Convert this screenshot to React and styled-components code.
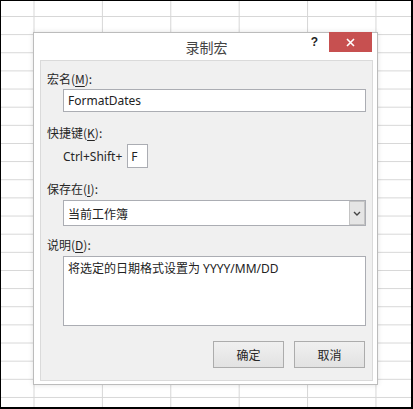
import styled, { createGlobalStyle } from "styled-components"

const Global = createGlobalStyle`
    body {
        margin: 0;
        font-family: "Noto Sans", "Noto Sans CJK SC", sans-serif;
    }
`

const Sheet = styled.div`
    box-sizing: border-box;
    width: 413px;
    height: 409px;
    border: solid #000;
    border-width: 1px 2px 2px 1px;
    padding: 31px 0 0 32px;
    background-color: #fff;
    background-image:
        linear-gradient(to right, #d6d6d6 1px, transparent 1px),
        linear-gradient(to bottom, #d6d6d6 1px, transparent 1px);
    background-size: 68.4px 100%, 100% 18.15px;
    background-position: 32.5px 0, 0 15px;
    overflow: hidden;
`

const Dialog = styled.div`
    box-sizing: border-box;
    width: 345px;
    height: 353px;
    background: #fff;
    border: 1px solid #bcbcbc;
    box-shadow: 0 0 5px rgba(0, 0, 0, 0.12);
    display: flex;
    flex-direction: column;
`

const TitleBar = styled.div`
    height: 28px;
    display: grid;
    grid-template-columns: 1fr auto 1fr;
    align-items: center;
`

const Title = styled.div`
    grid-column: 2;
    font-family: "Noto Sans CJK SC", sans-serif;
    font-size: 14px;
    color: #444;
    padding-left: 2px;
`

const Controls = styled.div`
    grid-column: 3;
    align-self: start;
    display: flex;
    justify-content: flex-end;
    align-items: flex-start;
    margin-top: -1px;
    padding-right: 5px;
`

const Help = styled.span`
    font-family: "Liberation Sans", sans-serif;
    font-weight: bold;
    font-size: 12px;
    color: #222;
    margin: 3px 11px 0 0;
`

const Close = styled.div`
    width: 43px;
    height: 20px;
    background: #c75050;
    display: flex;
    align-items: center;
    justify-content: center;
`

const Panel = styled.div`
    flex: 1;
    margin: 0 4px 3px 6px;
    background: #f0f0f0;
    border: 1px solid #dadada;
    padding: 10px 6px 12px 6px;
    display: flex;
    flex-direction: column;
`

const Label = styled.div`
    font-family: "Noto Sans CJK SC", sans-serif;
    font-size: 12px;
    line-height: 16px;
    height: 16px;
    color: #262626;
    margin-top: ${p => p.$top || 0}px;
    margin-bottom: ${p => p.$bottom || 3}px;

    u {
        text-underline-offset: 2px;
    }
`

const Field = styled.div`
    box-sizing: border-box;
    margin-left: 16px;
    height: ${p => p.$h}px;
    background: #fff;
    border: 1px solid #abadb3;
    font-family: "Noto Sans", "Noto Sans CJK SC", sans-serif;
    font-size: 12px;
    color: #222;
    padding: ${p => p.$pad || "3px 4px"};
    display: flex;
    align-items: ${p => p.$align || "center"};
`

const FieldText = styled.span`
    flex: 1;
    font-family: ${p => (p.$cjk ? `"Noto Sans CJK SC", sans-serif` : "inherit")};
`

const DropButton = styled.div`
    box-sizing: border-box;
    width: 16px;
    height: 100%;
    background: #e5e5e5;
    border: 1px solid #c4c4c4;
    display: flex;
    align-items: center;
    justify-content: center;
`

const ShortcutRow = styled.div`
    margin-left: 16px;
    height: 24px;
    display: flex;
    align-items: center;
    gap: 5px;
    font-size: 12px;
    color: #262626;
`

const KeyBox = styled.div`
    box-sizing: border-box;
    width: 21px;
    height: 24px;
    background: #fff;
    border: 1px solid #abadb3;
    padding: 3px 0 0 3px;
    font-size: 12px;
    color: #222;
`

const Buttons = styled.div`
    margin-top: 15px;
    display: flex;
    justify-content: flex-end;
    gap: 10px;
    padding-right: 1px;
`

const Button = styled.div`
    box-sizing: border-box;
    width: 71px;
    height: 27px;
    background: linear-gradient(#f0f0f0, #e2e2e2);
    border: 1px solid #acacac;
    display: flex;
    align-items: center;
    justify-content: center;
    font-family: "Noto Sans CJK SC", sans-serif;
    font-size: 12px;
    color: #262626;
`

export default function App() {
    return (
        <>
            <Global />
            <Sheet>
                <Dialog>
                    <TitleBar>
                        <Title>录制宏</Title>
                        <Controls>
                            <Help>?</Help>
                            <Close>
                                <svg width="9" height="9" viewBox="0 0 9 9">
                                    <path d="M1 1L8 8M8 1L1 8" stroke="#fff" strokeWidth="1.6" />
                                </svg>
                            </Close>
                        </Controls>
                    </TitleBar>
                    <Panel>
                        <Label $bottom={2}>宏名(<u>M</u>):</Label>
                        <Field $h={23}>
                            <FieldText>FormatDates</FieldText>
                        </Field>

                        <Label $top={13}>快捷键(<u>K</u>):</Label>
                        <ShortcutRow>
                            <span>Ctrl+Shift+</span>
                            <KeyBox>F</KeyBox>
                        </ShortcutRow>

                        <Label $top={13}>保存在(<u>I</u>):</Label>
                        <Field $h={26} $pad="0 0 0 4px">
                            <FieldText $cjk>当前工作簿</FieldText>
                            <DropButton>
                                <svg width="8" height="5" viewBox="0 0 8 5">
                                    <path d="M1 1L4 4L7 1" fill="none" stroke="#444" strokeWidth="1.4" />
                                </svg>
                            </DropButton>
                        </Field>

                        <Label $top={11}>说明(<u>D</u>):</Label>
                        <Field $h={70} $align="flex-start" $pad="2px 4px">
                            <FieldText>将选定的日期格式设置为 YYYY/MM/DD</FieldText>
                        </Field>

                        <Buttons>
                            <Button>确定</Button>
                            <Button>取消</Button>
                        </Buttons>
                    </Panel>
                </Dialog>
            </Sheet>
        </>
    )
}
